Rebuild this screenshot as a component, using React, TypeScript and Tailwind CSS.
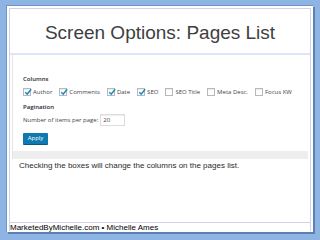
const columns = [
  { label: "Author", checked: true },
  { label: "Comments", checked: true },
  { label: "Date", checked: true },
  { label: "SEO", checked: true },
  { label: "SEO Title", checked: false },
  { label: "Meta Desc.", checked: false },
  { label: "Focus KW", checked: false },
];

const Box = ({ checked }: { checked: boolean }) => (
  <span className="relative w-[8px] h-[8px] border border-[#b4b9be] bg-white shadow-[inset_0_1px_1px_rgba(0,0,0,0.08)] shrink-0">
    {checked && (
      <svg
        viewBox="0 0 10 10"
        className="absolute left-[0px] top-[-1px] w-[8px] h-[8px]">
        <path
          d="M1.5 5.2 L4 7.6 L9 1.5"
          fill="none"
          stroke="#1e8cbe"
          strokeWidth="1.8"
        />
      </svg>
    )}
  </span>
);

const App = () => {
  return (
    <div className="w-[320px] h-[240px] bg-[#8db4e2] pt-[5px] pl-[6px] overflow-hidden">
      <div className="w-[307px] h-[227px] bg-white border-l border-t border-[#6f94c8] shadow-[2px_2px_0_#5d7fb3] px-[2px] pt-[2px] pb-[1px]">
        <div className="h-full border border-b-0 border-[#cdd3ea] flex flex-col">
          {/* title */}
          <div className="h-[46px] shrink-0 flex items-center justify-center border-b-2 border-[#dce6f6]">
            <h1 className="font-['Liberation_Sans',Arial,sans-serif] text-[19px] text-[#404040] leading-none mt-[2px]">
              Screen Options: Pages List
            </h1>
          </div>

          {/* screenshot */}
          <div className="mx-[2px] bg-white border-l border-[#e4e4e4] font-['Open_Sans',sans-serif] text-[6px] text-[#444] flex flex-col">
            <div className="pl-[10px] pt-[20px] flex flex-col">
              <div className="h-[8px] leading-[8px] font-semibold text-[#23282d]">
                Columns
              </div>
              <div className="mt-[5px] h-[8px] flex items-center gap-[7px]">
                {columns.map(({ label, checked }) => (
                  <label key={label} className="flex items-center gap-[2px]">
                    <Box checked={checked} />
                    <span className="leading-[8px]">{label}</span>
                  </label>
                ))}
              </div>
              <div className="mt-[7px] h-[8px] leading-[8px] font-semibold text-[#23282d]">
                Pagination
              </div>
              <div className="mt-[3px] h-[12px] flex items-center gap-[2px]">
                <span className="leading-[8px]">Number of items per page:</span>
                <span className="w-[25px] h-[12px] border border-[#ddd] shadow-[inset_0_1px_1px_rgba(0,0,0,0.07)] pl-[2px] leading-[10px]">
                  20
                </span>
              </div>
              <div className="mt-[7px] mb-[7px]">
                <button className="w-[25px] h-[11px] bg-[#0e79b0] rounded-[1px] text-white text-[6px] leading-[11px] shadow-[0_1px_0_#005a87]">
                  Apply
                </button>
              </div>
            </div>
            <div className="h-[8px] bg-[#eeeeee]" />
          </div>

          {/* caption */}
          <p className="mt-[2px] pl-[9px] font-['Liberation_Sans',Arial,sans-serif] text-[8px] leading-[10px] text-[#2a2a2a]">
            Checking the boxes will change the columns on the pages list.
          </p>

          {/* footer */}
          <div className="mt-auto border-t border-[#cdd3ea] h-[9px] flex items-center">
            <span className="font-['Liberation_Sans',Arial,sans-serif] text-[8px] leading-[9px] text-black">
              MarketedByMichelle.com • Michelle Ames
            </span>
          </div>
        </div>
      </div>
    </div>
  );
};

export default App;
